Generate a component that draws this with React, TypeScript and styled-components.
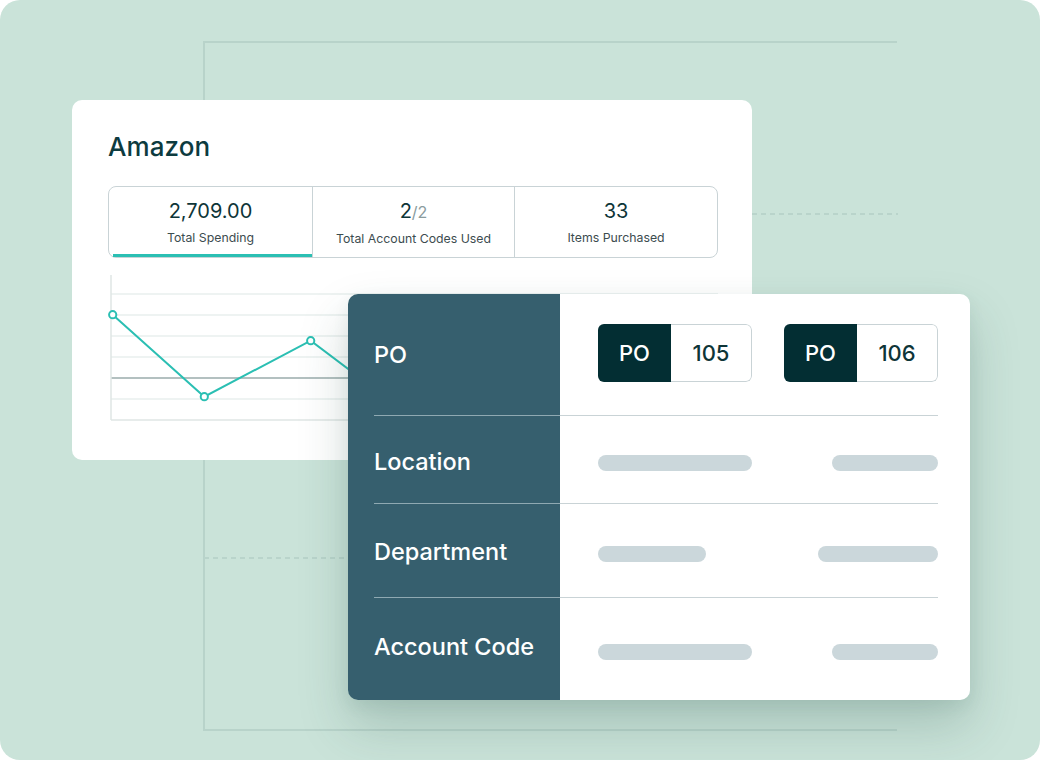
import styled, { createGlobalStyle } from "styled-components";

const GlobalStyle = createGlobalStyle`
  html, body {
    margin: 0;
    padding: 0;
    background: #ffffff;
  }
  body {
    font-family: Inter, "Noto Sans", "Liberation Sans", sans-serif;
    -webkit-font-smoothing: antialiased;
  }
`;

const stats = [
  { value: "2,709.00", suffix: "", label: "Total Spending", active: true },
  { value: "2", suffix: "/2", label: "Total Account Codes Used", active: false },
  { value: "33", suffix: "", label: "Items Purchased", active: false },
];

const chartPoints: [number, number][] = [
  [4.7, 40.7],
  [96.3, 122.7],
  [202.7, 66.7],
  [300, 140],
  [420, 90],
  [520, 120],
  [600, 70],
];

const gridLines = [20, 41, 62, 83, 125];

type Row = {
  label: string;
  height: number;
  shift: number;
  kind: "po" | "bars";
  values: (string | number)[];
};

const rows: Row[] = [
  { label: "PO", height: 121, shift: 0, kind: "po", values: ["105", "106"] },
  { label: "Location", height: 87, shift: 4, kind: "bars", values: [154, 106] },
  { label: "Department", height: 93, shift: 2, kind: "bars", values: [108, 120] },
  { label: "Account Code", height: 102, shift: -6, kind: "bars", values: [154, 106] },
];

export default function App() {
  return (
    <>
      <GlobalStyle />
      <Canvas>
        <Frame />
        <DashedLine $left={752} $top={213} $width={146} />
        <DashedLine $left={204} $top={557} $width={144} />

        <SummaryCard>
          <Title>Amazon</Title>
          <StatsBox>
            {stats.map((s) => (
              <StatCell key={s.label} $active={s.active}>
                <StatValue>
                  {s.value}
                  {s.suffix && <StatSuffix>{s.suffix}</StatSuffix>}
                </StatValue>
                <StatLabel>{s.label}</StatLabel>
              </StatCell>
            ))}
          </StatsBox>
          <Chart width="610" height="150" viewBox="0 0 610 150">
            {gridLines.map((y) => (
              <line key={y} x1="3" x2="610" y1={y} y2={y} stroke="#e9efee" strokeWidth="1.5" />
            ))}
            <line x1="3" x2="610" y1="104" y2="104" stroke="#9aabab" strokeWidth="1.5" />
            <line x1="3" x2="610" y1="146" y2="146" stroke="#dfe6e5" strokeWidth="1.5" />
            <line x1="3" x2="3" y1="1" y2="146" stroke="#dfe6e5" strokeWidth="1.5" />
            <polyline
              points={chartPoints.map((p) => p.join(",")).join(" ")}
              fill="none"
              stroke="#2bbfb3"
              strokeWidth="2"
            />
            {chartPoints.slice(0, 3).map(([x, y]) => (
              <circle key={x} cx={x} cy={y} r="3.6" fill="#fff" stroke="#2bbfb3" strokeWidth="2" />
            ))}
          </Chart>
        </SummaryCard>

        <DetailCard>
          {rows.map((row, i) => (
            <div key={row.label}>
              {i > 0 && <Divider />}
              <DetailRow $height={row.height}>
                <RowLabel $shift={row.shift}>{row.label}</RowLabel>
                <RowContent>
                  {row.kind === "po"
                    ? row.values.map((v) => (
                        <PoBadge key={v}>
                          <PoTag>PO</PoTag>
                          <PoNumber>{v}</PoNumber>
                        </PoBadge>
                      ))
                    : row.values.map((w, j) => <SkeletonBar key={j} $width={w as number} />)}
                </RowContent>
              </DetailRow>
            </div>
          ))}
        </DetailCard>
      </Canvas>
    </>
  );
}

const Canvas = styled.div`
  position: relative;
  width: 1040px;
  height: 760px;
  background: #cae3d9;
  border-radius: 20px;
  overflow: hidden;
  padding: 100px 0 0 72px;
  box-sizing: border-box;
`;

const Frame = styled.div`
  position: absolute;
  left: 203px;
  top: 41px;
  width: 694px;
  height: 690px;
  border: 2px solid #b8d3ca;
  border-right: none;
  box-sizing: border-box;
`;

const DashedLine = styled.div<{ $left: number; $top: number; $width: number }>`
  position: absolute;
  left: ${(p) => p.$left}px;
  top: ${(p) => p.$top}px;
  width: ${(p) => p.$width}px;
  height: 2px;
  background: repeating-linear-gradient(to right, #b9d4cb 0 5px, transparent 5px 9px);
`;

const SummaryCard = styled.div`
  position: relative;
  width: 680px;
  height: 360px;
  background: #ffffff;
  border-radius: 10px;
  padding: 31px 34px 0 36px;
  box-sizing: border-box;
`;

const Title = styled.h1`
  margin: 0;
  font-size: 26px;
  line-height: 32px;
  font-weight: 500;
  color: #0d3b3f;
  letter-spacing: 0.1px;
`;

const StatsBox = styled.div`
  margin-top: 23px;
  display: grid;
  grid-template-columns: 203px 202px 1fr;
  height: 72px;
  border: 1px solid #c9d3d6;
  border-radius: 8px;
  box-sizing: border-box;
`;

const StatCell = styled.div<{ $active: boolean }>`
  position: relative;
  display: flex;
  flex-direction: column;
  align-items: center;
  padding-top: 12px;
  & + & {
    border-left: 1px solid #c9d3d6;
  }
  &::after {
    content: "";
    display: ${(p) => (p.$active ? "block" : "none")};
    position: absolute;
    left: 4px;
    right: 0;
    bottom: 0;
    height: 3px;
    background: #2bbfb3;
  }
`;

const StatValue = styled.div`
  font-size: 20px;
  line-height: 24px;
  font-weight: 400;
  color: #0e3538;
`;

const StatSuffix = styled.span`
  font-size: 16px;
  font-weight: 400;
  color: #8a9b9d;
`;

const StatLabel = styled.div`
  margin-top: 7px;
  font-size: 12.3px;
  line-height: 16px;
  color: #3c4c4f;
`;

const Chart = styled.svg`
  display: block;
  margin-top: 16px;
`;

const DetailCard = styled.div`
  position: absolute;
  left: 348px;
  top: 294px;
  width: 622px;
  height: 406px;
  border-radius: 10px;
  overflow: hidden;
  background: linear-gradient(to right, #365f6e 212px, #ffffff 212px);
  box-shadow: 0 26px 50px rgba(40, 84, 72, 0.22), 0 6px 16px rgba(40, 84, 72, 0.08);
`;

const DetailRow = styled.div<{ $height: number }>`
  display: grid;
  grid-template-columns: 212px 1fr;
  height: ${(p) => p.$height}px;
  align-items: center;
`;

const Divider = styled.div`
  height: 1px;
  margin: 0 32px 0 26px;
  background: linear-gradient(to right, #8fa9b2 186px, #c9d3d6 186px);
`;

const RowLabel = styled.div<{ $shift: number }>`
  padding-left: 26px;
  font-size: 23.5px;
  font-weight: 500;
  color: #ffffff;
  margin-top: ${(p) => p.$shift}px;
`;

const RowContent = styled.div`
  display: flex;
  justify-content: space-between;
  align-items: center;
  padding: 0 32px 0 38px;
`;

const PoBadge = styled.div`
  display: flex;
  height: 58px;
  width: 154px;
  border-radius: 6px;
  overflow: hidden;
  margin-top: -3px;
`;

const PoTag = styled.div`
  width: 73px;
  display: flex;
  align-items: center;
  justify-content: center;
  background: #032e33;
  color: #ffffff;
  font-size: 22px;
  font-weight: 500;
`;

const PoNumber = styled.div`
  flex: 1;
  display: flex;
  align-items: center;
  justify-content: center;
  border: 1.5px solid #c9d3d6;
  border-left: none;
  border-radius: 0 6px 6px 0;
  color: #0e3538;
  font-size: 22px;
  font-weight: 500;
`;

const SkeletonBar = styled.div<{ $width: number }>`
  width: ${(p) => p.$width}px;
  height: 16px;
  border-radius: 8px;
  background: #cbd7db;
  margin-top: 6px;
`;
